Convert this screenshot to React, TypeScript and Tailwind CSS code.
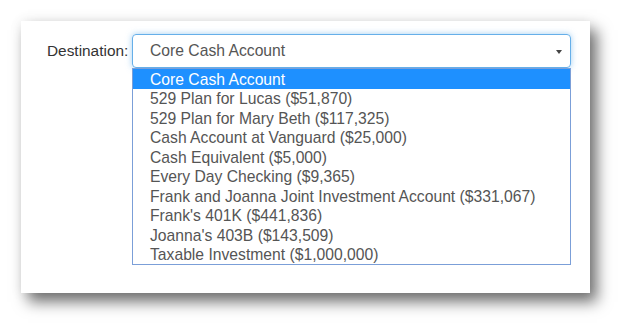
const accounts = [
  "Core Cash Account",
  "529 Plan for Lucas ($51,870)",
  "529 Plan for Mary Beth ($117,325)",
  "Cash Account at Vanguard ($25,000)",
  "Cash Equivalent ($5,000)",
  "Every Day Checking ($9,365)",
  "Frank and Joanna Joint Investment Account ($331,067)",
  "Frank's 401K ($441,836)",
  "Joanna's 403B ($143,509)",
  "Taxable Investment ($1,000,000)",
];

export default function App() {
  const selected = 0;

  return (
    <div className="h-[336px] w-[632px] bg-white pl-[21px] pt-[21px] font-['Liberation_Sans',Arial,sans-serif] text-[15.7px]">
      <div className="h-[272px] w-[569px] bg-white pl-[26px] pt-[13px] shadow-[7px_9px_14px_rgba(0,0,0,0.55),0_0_12px_rgba(0,0,0,0.08)]">
        <div className="flex items-start">
          <label className="flex h-[34px] w-[85px] items-center text-[15.4px] text-[#333]">
            Destination:
          </label>
          <div className="relative w-[439px]">
            <div className="flex h-[34px] items-center justify-between rounded-[4px] border border-[#66afe9] pl-[17px] pr-[7px] text-[#555] shadow-[0_0_6px_rgba(102,175,233,0.6)]">
              <span>{accounts[selected]}</span>
              <svg width="8" height="6" viewBox="0 0 8 6" className="mt-[1px]">
                <path d="M1 1h6L4 5z" fill="#444" />
              </svg>
            </div>
            <ul className="absolute left-0 right-0 top-[34px] border border-[#7b9fd8] bg-white">
              {accounts.map((a, i) => (
                <li
                  key={a}
                  className={`flex h-[19.5px] items-center whitespace-nowrap pl-[17px] pt-[2px] leading-none ${
                    i === selected
                      ? "bg-[#1e90ff] text-white"
                      : "text-[#555]"
                  }`}
                >
                  {a}
                </li>
              ))}
            </ul>
          </div>
        </div>
      </div>
    </div>
  );
}
